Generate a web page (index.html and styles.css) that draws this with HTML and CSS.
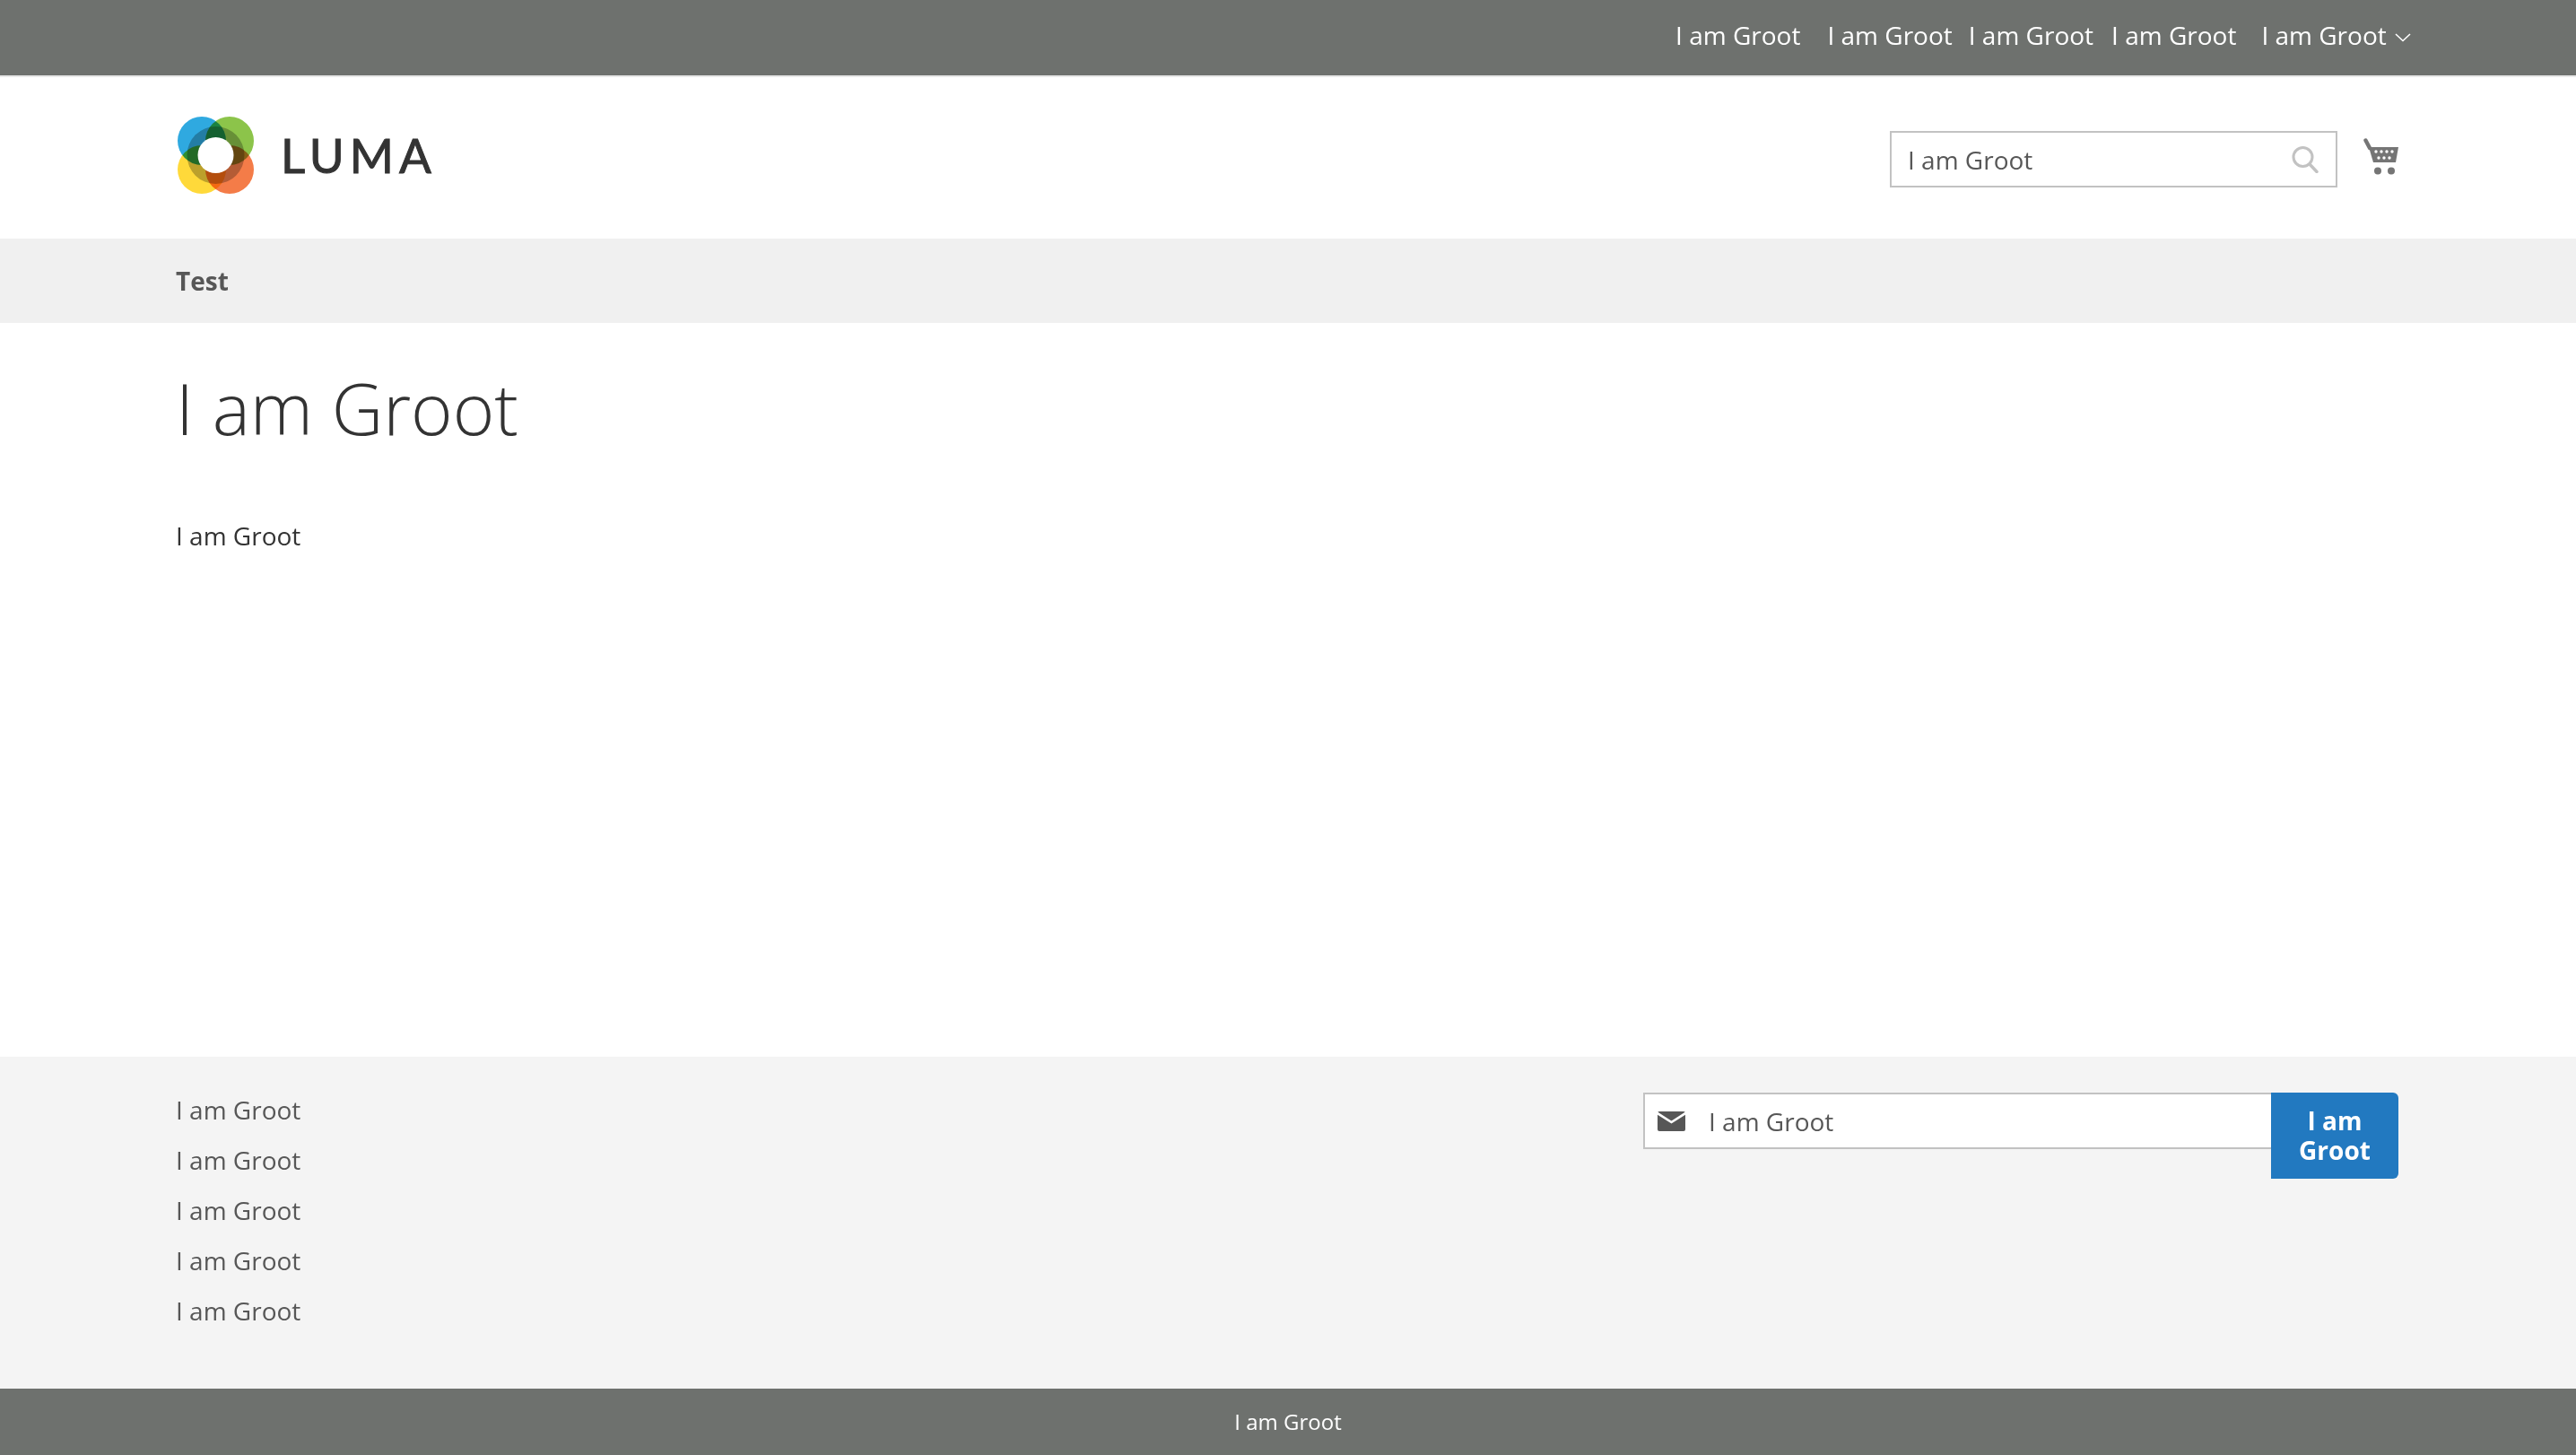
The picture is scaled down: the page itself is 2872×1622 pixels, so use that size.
FILE: index.html
```html
<!DOCTYPE html>
<html lang="en">

<head>
    <meta charset="UTF-8">
    <title>Luma</title>
    <link rel="stylesheet" href="styles.css">
</head>

<body>

    <div class="topbar">
        <a class="top-link">I am Groot</a>
        <a class="top-link">I am Groot</a>
        <a class="top-link">I am Groot</a>
        <a class="top-link">I am Groot</a>
        <a class="top-link">I am Groot
            <svg class="chevron" width="18" height="10" viewBox="0 0 18 10">
                <polyline points="1,1 9,8.5 17,1" fill="none" stroke="#fff" stroke-width="1.6"></polyline>
            </svg>
        </a>
    </div>

    <header>
        <div class="logo">
            <svg class="logo-mark" width="86" height="86" viewBox="0 0 86 86">
                <g class="petals">
                    <circle cx="27" cy="27" r="27" fill="#2fa9e0"></circle>
                    <circle cx="58" cy="27" r="27" fill="#8cc44a"></circle>
                    <circle cx="27" cy="59" r="27" fill="#ffd93a"></circle>
                    <circle cx="58" cy="59" r="27" fill="#f47c48"></circle>
                    <circle cx="42.5" cy="43" r="32" fill="#bcbcbc"></circle>
                </g>
                <circle cx="42.5" cy="43" r="20" fill="#fff"></circle>
            </svg>
            <span class="logo-text">LUMA</span>
        </div>
        <div class="header-tools">
            <div class="search">
                <span>I am Groot</span>
                <svg width="30" height="30" viewBox="0 0 30 30">
                    <circle cx="12.5" cy="12" r="10.5" fill="none" stroke="#c2c2c2" stroke-width="3"></circle>
                    <line x1="20" y1="20" x2="28" y2="28.5" stroke="#c2c2c2" stroke-width="3.4" stroke-linecap="round"></line>
                </svg>
            </div>
            <svg class="cart" width="39" height="41" viewBox="0 0 39 41">
                <line x1="2.5" y1="2.5" x2="7" y2="11" stroke="#757575" stroke-width="4.4" stroke-linecap="round"></line>
                <polygon points="6,10 39,10 36,27 11,27" fill="#757575"></polygon>
                <g fill="#fff">
                    <circle cx="14" cy="15" r="1.7"></circle>
                    <circle cx="20" cy="15" r="1.7"></circle>
                    <circle cx="26" cy="15" r="1.7"></circle>
                    <circle cx="32" cy="15" r="1.7"></circle>
                    <circle cx="17" cy="22" r="1.7"></circle>
                    <circle cx="23" cy="22" r="1.7"></circle>
                    <circle cx="29" cy="22" r="1.7"></circle>
                </g>
                <circle cx="16" cy="36.5" r="4" fill="#757575"></circle>
                <circle cx="31" cy="36.5" r="4" fill="#757575"></circle>
            </svg>
        </div>
    </header>

    <nav>
        <a>Test</a>
    </nav>

    <main>
        <h1>I am Groot</h1>
        <p>I am Groot</p>
    </main>

    <footer>
        <ul class="footer-links">
            <li>I am Groot</li>
            <li>I am Groot</li>
            <li>I am Groot</li>
            <li>I am Groot</li>
            <li>I am Groot</li>
        </ul>
        <div class="newsletter">
            <div class="newsletter-field">
                <svg width="31" height="22" viewBox="0 0 31 22">
                    <rect width="31" height="22" rx="2" fill="#575757"></rect>
                    <polyline points="-1,1.5 15.5,12 32,1.5" fill="none" stroke="#fff" stroke-width="2.6"></polyline>
                </svg>
                <span>I am Groot</span>
            </div>
            <button>I am Groot</button>
        </div>
    </footer>

    <div class="copyright">I am Groot</div>

</body>

</html>
```

FILE: styles.css
```css
* {
    font-family: "Open Sans", sans-serif;
    box-sizing: border-box;
}

body {
    margin: 0;
    min-height: 100vh;
    display: flex;
    flex-direction: column;
    background-color: #fff;
    color: #333;
    font-size: 28px;
}

.topbar {
    height: 86px;
    border-bottom: 2px solid #e8e8e8;
    background-color: #6e716e;
    display: flex;
    justify-content: flex-end;
    align-items: center;
    padding-right: 184px;
    padding-bottom: 6px;
    color: #fff;
}

.top-link {
    white-space: nowrap;
    margin-left: 30px;
}

.top-link:nth-child(3) {
    margin-left: 18px;
}

.top-link:nth-child(4) {
    margin-left: 20px;
}

.top-link:nth-child(5) {
    margin-left: 28px;
}

.chevron {
    margin-left: 2px;
    vertical-align: 3px;
}

header {
    height: 180px;
    padding: 0 198px;
    display: flex;
    justify-content: space-between;
    align-items: center;
}

.logo {
    display: flex;
    align-items: center;
    gap: 29px;
    margin-bottom: 6px;
}

.petals circle {
    mix-blend-mode: multiply;
}

.petals {
    isolation: isolate;
}

.logo-text {
    font-family: "Lato", sans-serif;
    font-size: 53px;
    font-weight: 400;
    letter-spacing: 6px;
    -webkit-text-stroke: 1px #333;
    color: #333;
    line-height: 1;
    margin-bottom: 2px;
}

.header-tools {
    display: flex;
    align-items: center;
    gap: 29px;
}

.search {
    width: 499px;
    height: 63px;
    margin-top: 3px;
    border: 2px solid #c2c2c2;
    padding: 0 19px 0 18px;
    display: flex;
    justify-content: space-between;
    align-items: center;
    color: #575757;
}

.cart {
    margin-top: -3px;
}

nav {
    height: 94px;
    padding: 0 196px;
    background-color: #f0f0f0;
    display: flex;
    align-items: center;
    font-weight: 700;
    color: #575757;
}

main {
    flex: 1;
    padding: 0 196px;
}

h1 {
    margin: 42px 0 0;
    font-size: 79.5px;
    font-weight: 300;
    line-height: 104px;
    color: #333;
}

main p {
    margin: 72px 0 0;
    line-height: 38px;
}

footer {
    background-color: #f4f4f4;
    padding: 31px 198px 59px 196px;
    display: flex;
    justify-content: space-between;
    align-items: flex-start;
}

.footer-links {
    list-style: none;
    margin: 0;
    padding: 0;
    color: #575757;
}

.footer-links li {
    line-height: 56px;
}

.newsletter {
    width: 842px;
    margin-top: 9px;
    display: flex;
    align-items: flex-start;
}

.newsletter-field {
    flex: 1;
    height: 63px;
    border: 2px solid #c2c2c2;
    border-right: 0;
    background-color: #fff;
    padding-left: 14px;
    display: flex;
    align-items: center;
    gap: 26px;
    color: #575757;
}

.newsletter button {
    width: 142px;
    height: 96px;
    border: 0;
    border-radius: 0 6px 6px 0;
    padding: 0 20px;
    background-color: #2279c0;
    color: #fff;
    font-size: 28px;
    font-weight: 700;
    line-height: 33px;
}

.copyright {
    height: 74px;
    padding-bottom: 2px;
    background-color: #6e716e;
    color: #fff;
    font-size: 24px;
    display: flex;
    justify-content: center;
    align-items: center;
}
```
